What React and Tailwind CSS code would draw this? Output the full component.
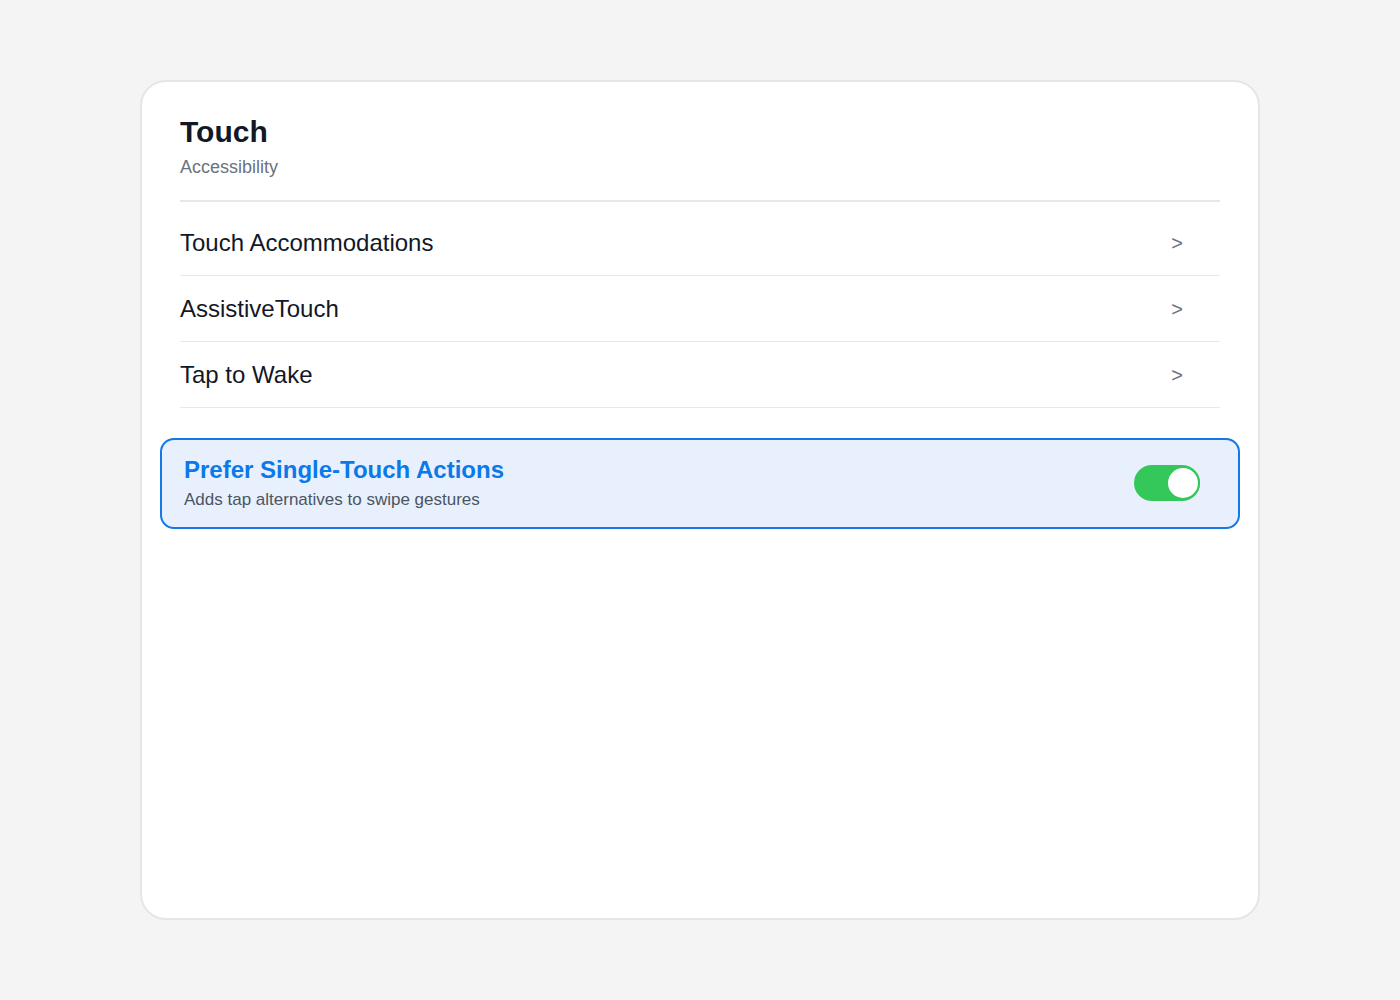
import React, { useState } from 'react';

const rows = ['Touch Accommodations', 'AssistiveTouch', 'Tap to Wake'];

const App = () => {
    const [singleTouch, setSingleTouch] = useState(true);

    return (
        <div className="min-h-screen bg-[#f4f4f4] flex justify-center pt-[80px] font-['Liberation_Sans',Arial,sans-serif]">
            <div className="w-[1120px] h-[840px] bg-white border-2 border-[#e6e6e6] rounded-[26px] px-[38px] pt-[32px]">
                {/* Header */}
                <div className="pb-[19px] border-b-2 border-[#e5e7eb]">
                    <h1 className="text-[30px] leading-9 font-bold text-[#111827]">Touch</h1>
                    <p className="mt-[3px] text-lg leading-7 text-[#6b7280]">Accessibility</p>
                </div>

                {/* Rows */}
                <div className="pt-2">
                    {rows.map((label) => (
                        <div key={label} className="h-[66px] flex items-center justify-between border-b border-[#e8e8e8] pr-[37px]">
                            <span className="text-2xl leading-8 text-[#111827]">{label}</span>
                            <span className="text-xl text-[#6b7280]">&gt;</span>
                        </div>
                    ))}
                </div>

                {/* Highlighted toggle row */}
                <div className="-mx-5 mt-[30px] flex items-center justify-between bg-[#e8f0fd] border-2 border-[#1677e6] rounded-[14px] pl-[22px] pr-[38px] pt-[14px] pb-[15px]">
                    <div>
                        <div className="text-2xl leading-8 font-bold text-[#0a79ea]">Prefer Single-Touch Actions</div>
                        <div className="mt-0.5 text-[17px] leading-6 text-[#4b5563]">Adds tap alternatives to swipe gestures</div>
                    </div>
                    <button
                        onClick={() => setSingleTouch(!singleTouch)}
                        className={`w-[66px] h-[36px] rounded-full flex items-center ${singleTouch ? 'bg-[#34c759] justify-end' : 'bg-[#d1d5db] justify-start'}`}
                    >
                        <span className="w-[34px] h-[34px] rounded-full bg-white border-2 border-[#34c759]"></span>
                    </button>
                </div>
            </div>
        </div>
    );
};

export default App;
